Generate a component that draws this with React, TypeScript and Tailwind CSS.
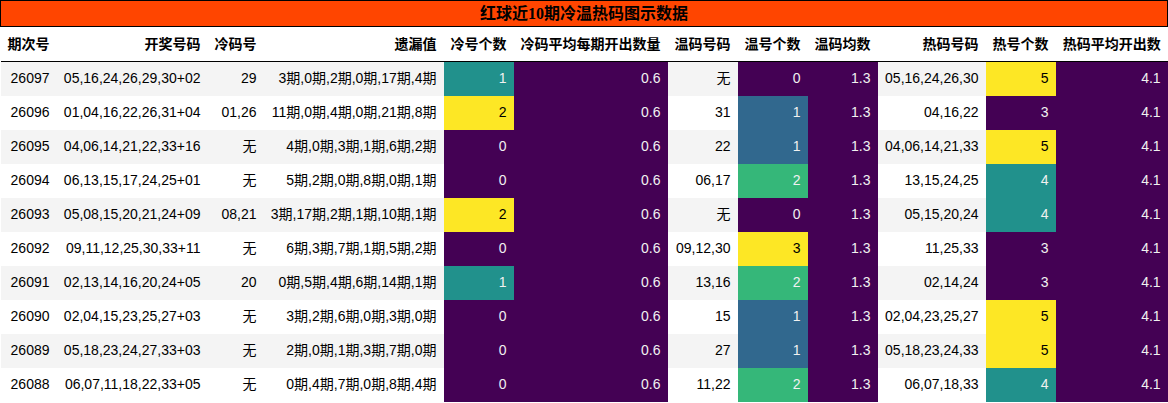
import React from "react"

type Row = {
  issue: string
  draw: string
  cold: string
  miss: string
  coldCount: number
  warm: string
  warmCount: number
  hot: string
  hotCount: number
}

const rows: Row[] = [
  { issue: "26097", draw: "05,16,24,26,29,30+02", cold: "29", miss: "3期,0期,2期,0期,17期,4期", coldCount: 1, warm: "无", warmCount: 0, hot: "05,16,24,26,30", hotCount: 5 },
  { issue: "26096", draw: "01,04,16,22,26,31+04", cold: "01,26", miss: "11期,0期,4期,0期,21期,8期", coldCount: 2, warm: "31", warmCount: 1, hot: "04,16,22", hotCount: 3 },
  { issue: "26095", draw: "04,06,14,21,22,33+16", cold: "无", miss: "4期,0期,3期,1期,6期,2期", coldCount: 0, warm: "22", warmCount: 1, hot: "04,06,14,21,33", hotCount: 5 },
  { issue: "26094", draw: "06,13,15,17,24,25+01", cold: "无", miss: "5期,2期,0期,8期,0期,1期", coldCount: 0, warm: "06,17", warmCount: 2, hot: "13,15,24,25", hotCount: 4 },
  { issue: "26093", draw: "05,08,15,20,21,24+09", cold: "08,21", miss: "3期,17期,2期,1期,10期,1期", coldCount: 2, warm: "无", warmCount: 0, hot: "05,15,20,24", hotCount: 4 },
  { issue: "26092", draw: "09,11,12,25,30,33+11", cold: "无", miss: "6期,3期,7期,1期,5期,2期", coldCount: 0, warm: "09,12,30", warmCount: 3, hot: "11,25,33", hotCount: 3 },
  { issue: "26091", draw: "02,13,14,16,20,24+05", cold: "20", miss: "0期,5期,4期,6期,14期,1期", coldCount: 1, warm: "13,16", warmCount: 2, hot: "02,14,24", hotCount: 3 },
  { issue: "26090", draw: "02,04,15,23,25,27+03", cold: "无", miss: "3期,2期,6期,0期,3期,0期", coldCount: 0, warm: "15", warmCount: 1, hot: "02,04,23,25,27", hotCount: 5 },
  { issue: "26089", draw: "05,18,23,24,27,33+03", cold: "无", miss: "2期,0期,1期,3期,7期,0期", coldCount: 0, warm: "27", warmCount: 1, hot: "05,18,23,24,33", hotCount: 5 },
  { issue: "26088", draw: "06,07,11,18,22,33+05", cold: "无", miss: "0期,4期,7期,0期,8期,4期", coldCount: 0, warm: "11,22", warmCount: 2, hot: "06,07,18,33", hotCount: 4 },
]

const headers = [
  "期次号",
  "开奖号码",
  "冷码号",
  "遗漏值",
  "冷号个数",
  "冷码平均每期开出数量",
  "温码号码",
  "温号个数",
  "温码均数",
  "热码号码",
  "热号个数",
  "热码平均开出数",
]

const widths = ["w-[56px]", "w-[151px]", "w-[56px]", "w-[180px]", "w-[70px]", "w-[154px]", "w-[70px]", "w-[70px]", "w-[70px]", "w-[108px]", "w-[70px]", "w-[112px]"]

// viridis-style gradient cells
const purple = "bg-[#440154] text-[#f1f1f1]"
const coldColor: Record<number, string> = {
  0: purple,
  1: "bg-[#21918c] text-[#f1f1f1]",
  2: "bg-[#fde725] text-black",
}
const warmColor: Record<number, string> = {
  0: purple,
  1: "bg-[#31688e] text-[#f1f1f1]",
  2: "bg-[#35b779] text-[#f1f1f1]",
  3: "bg-[#fde725] text-black",
}
const hotColor: Record<number, string> = {
  3: purple,
  4: "bg-[#21918c] text-[#f1f1f1]",
  5: "bg-[#fde725] text-black",
}

const td = "h-[34px] px-[7px] text-right whitespace-nowrap"

export default function App() {
  return (
    <div className="w-[1168px] h-[403px] bg-white font-['Liberation_Sans','Noto_Sans_CJK_SC',sans-serif] text-[14px] text-black">
      <table className="table-fixed border-collapse w-[1167px]">
        <colgroup>
          {widths.map((w, i) => (
            <col key={i} className={w} />
          ))}
        </colgroup>
        <thead>
          <tr>
            <th
              colSpan={12}
              className="h-[26px] p-0 border border-black bg-[#ff4500] text-center text-[16px] font-bold font-['Liberation_Serif','Noto_Sans_CJK_SC',serif]"
            >
              红球近10期冷温热码图示数据
            </th>
          </tr>
          <tr className="border-b border-black">
            {headers.map((h) => (
              <th key={h} className="h-[35px] px-[7px] text-right font-bold whitespace-nowrap">
                {h}
              </th>
            ))}
          </tr>
        </thead>
        <tbody>
          {rows.map((r, i) => {
            const zebra = i % 2 === 0 ? "bg-[#f4f4f4]" : "bg-white"
            return (
              <tr key={r.issue} className={zebra}>
                <td className={td}>{r.issue}</td>
                <td className={td}>{r.draw}</td>
                <td className={td}>{r.cold}</td>
                <td className={td}>{r.miss}</td>
                <td className={`${td} ${coldColor[r.coldCount]}`}>{r.coldCount}</td>
                <td className={`${td} ${purple}`}>0.6</td>
                <td className={td}>{r.warm}</td>
                <td className={`${td} ${warmColor[r.warmCount]}`}>{r.warmCount}</td>
                <td className={`${td} ${purple}`}>1.3</td>
                <td className={td}>{r.hot}</td>
                <td className={`${td} ${hotColor[r.hotCount]}`}>{r.hotCount}</td>
                <td className={`${td} ${purple}`}>4.1</td>
              </tr>
            )
          })}
        </tbody>
      </table>
    </div>
  )
}
